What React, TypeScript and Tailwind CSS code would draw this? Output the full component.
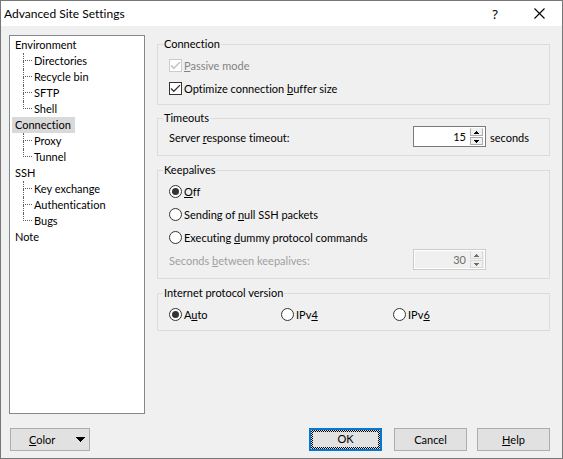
import React from 'react';
import clsx from 'clsx';

const tree = [
  { label: 'Environment', children: ['Directories', 'Recycle bin', 'SFTP', 'Shell'] },
  { label: 'Connection', children: ['Proxy', 'Tunnel'], selected: true },
  { label: 'SSH', children: ['Key exchange', 'Authentication', 'Bugs'] },
  { label: 'Note', children: [] },
];

// "&" marks the accelerator letter, as in the native resource strings
const Accel: React.FC<{ text: string }> = ({ text }) => {
  const i = text.indexOf('&');
  if (i < 0) return <>{text}</>;
  return (
    <span className="whitespace-pre">
      {text.slice(0, i)}
      <u className="underline-offset-1">{text[i + 1]}</u>
      {text.slice(i + 2)}
    </span>
  );
};

const Group: React.FC<{ title: string; className?: string; children: React.ReactNode }> = ({
  title,
  className,
  children,
}) => (
  <fieldset className={clsx('min-w-0 border border-[#dcdcdc] px-[11px]', className)}>
    <legend className="-ml-1.5 px-px leading-[14px]">{title}</legend>
    {children}
  </fieldset>
);

const Check: React.FC<{ text: string; disabled?: boolean }> = ({ text, disabled }) => (
  <label className={clsx('flex h-[23px] items-center gap-0.5', disabled && 'text-[#838383]')}>
    <span className="grid shrink-0">
      <input
        type="checkbox"
        defaultChecked
        disabled={disabled}
        className="peer col-start-1 row-start-1 size-[13px] appearance-none border border-[#333] bg-white disabled:border-[#ccc]"
      />
      <svg
        viewBox="0 0 13 13"
        className="pointer-events-none invisible col-start-1 row-start-1 size-[13px] text-[#333] peer-checked:visible peer-disabled:text-[#bbb]"
      >
        <path d="M2 6.5L4.8 9.3L11 3.1" fill="none" stroke="currentColor" strokeWidth="1.3" />
      </svg>
    </span>
    <Accel text={text} />
  </label>
);

const Radio: React.FC<{ text: string; name: string; checked?: boolean }> = ({ text, name, checked }) => (
  <label className="flex h-[23px] items-center gap-0.5">
    <span className="grid shrink-0 place-items-center">
      <input
        type="radio"
        name={name}
        defaultChecked={checked}
        className="peer col-start-1 row-start-1 size-[13px] appearance-none rounded-full border border-[#333] bg-white"
      />
      <span className="pointer-events-none invisible col-start-1 row-start-1 size-[7px] rounded-full bg-[#333] peer-checked:visible" />
    </span>
    <Accel text={text} />
  </label>
);

const SpinButton: React.FC<{ label: string; up?: boolean; disabled?: boolean }> = ({ label, up, disabled }) => (
  <button
    type="button"
    aria-label={label}
    disabled={disabled}
    className={clsx(
      'flex h-2 w-[13px] items-center justify-center border bg-[#f0f0f0]',
      disabled ? 'border-[#d9d9d9] text-[#6d6d6d]' : 'border-[#acacac] text-black',
      up && 'border-t-[#f0f0f0]',
    )}
  >
    <svg viewBox="0 0 5 3" className="h-[3px] w-[5px]" fill="currentColor" shapeRendering="crispEdges">
      {up ? <path d="M2 0h1v1h1v1h1v1H0V2h1V1h1z" /> : <path d="M0 0h5v1H4v1H3v1H2V2H1V1H0z" />}
    </svg>
  </button>
);

const Spinner: React.FC<{ id: string; value: string; disabled?: boolean }> = ({ id, value, disabled }) => (
  <div
    className={clsx(
      'flex h-[21px] w-[73px] shrink-0 items-center border bg-white p-px',
      disabled ? 'border-[#ccc]' : 'border-[#7a7a7a]',
    )}
  >
    <div className={clsx('flex h-full w-full items-center gap-1 pr-px', disabled && 'bg-[#f0f0f0]')}>
      <input
        id={id}
        type="text"
        defaultValue={value}
        disabled={disabled}
        className="w-0 grow bg-transparent text-right outline-none disabled:text-[#6d6d6d]"
      />
      <div className="flex flex-col gap-px">
        <SpinButton label="Increase" up disabled={disabled} />
        <SpinButton label="Decrease" disabled={disabled} />
      </div>
    </div>
  </div>
);

const DialogButton: React.FC<{ text: string }> = ({ text }) => (
  <button type="button" className="h-[23px] w-[73px] border border-[#adadad] bg-[#e1e1e1]">
    <Accel text={text} />
  </button>
);

const App: React.FC = () => {
  return (
    <div className="flex min-h-screen flex-col border border-[#777] bg-[#f0f0f0] font-[Lato,sans-serif] text-[11px] leading-[14px] text-black [font-variant-ligatures:none]">
      <header className="flex h-[25px] items-center bg-white pl-[3px] pr-[17px]">
        <h1 className="grow text-xs">Advanced Site Settings</h1>
        <button type="button" aria-label="Help" className="mr-9 font-['Noto_Sans',sans-serif] text-[13px]">
          ?
        </button>
        <button type="button" aria-label="Close">
          <svg viewBox="0 0 11 11" className="size-[11px]" fill="none" stroke="currentColor" strokeWidth="1.1">
            <path d="M.5 .5l10 10M10.5 .5l-10 10" />
          </svg>
        </button>
      </header>

      <main className="flex grow gap-3 pb-3.5 pl-2 pr-3 pt-[9px]">
        <nav className="w-[136px] shrink-0 border border-[#828790] bg-white px-0.5 py-px">
          <ul>
            {tree.map((node) => (
              <li key={node.label}>
                <a
                  href="#"
                  className={clsx('block h-4 w-fit pl-[3px] pr-1 leading-4', node.selected && 'bg-[#d9d9d9]')}
                >
                  {node.label}
                </a>
                <ul className="pl-[11px]">
                  {node.children.map((child, i) => (
                    <li key={child} className="flex h-4 gap-0.5 leading-4">
                      <span className="flex w-[9px] flex-col">
                        <span className="h-2 border-b border-l border-dotted border-[#606060]" />
                        {i < node.children.length - 1 && (
                          <span className="h-2 border-l border-dotted border-[#606060]" />
                        )}
                      </span>
                      <a href="#">{child}</a>
                    </li>
                  ))}
                </ul>
              </li>
            ))}
          </ul>
        </nav>

        <form className="min-w-0 grow pt-0.5">
          <Group title="Connection" className="pb-1 pt-[3px]">
            <Check text="&Passive mode" disabled />
            <Check text="Optimize connection &buffer size" />
          </Group>

          <Group title="Timeouts" className="mt-1.5 pb-2 pt-px">
            <div className="flex items-center">
              <label htmlFor="timeout" className="grow pt-0.5">
                <Accel text="Server &response timeout:" />
              </label>
              <Spinner id="timeout" value="15" />
              <span className="w-[52px] pl-1 pt-0.5">seconds</span>
            </div>
          </Group>

          <Group title="Keepalives" className="mt-[7px] pb-2 pt-[3px]">
            <Radio name="keepalives" text="&Off" checked />
            <Radio name="keepalives" text="Sending of &null SSH packets" />
            <Radio name="keepalives" text="Executing &dummy protocol commands" />
            <div className="flex items-center pr-[52px]">
              <label htmlFor="interval" className="grow pt-0.5 text-[#a0a0a0]">
                <Accel text="Seconds &between keepalives:" />
              </label>
              <Spinner id="interval" value="30" disabled />
            </div>
          </Group>

          <Group title="Internet protocol version" className="mt-[7px] pb-1 pt-[3px]">
            <div className="grid grid-cols-[112px_112px_1fr]">
              <Radio name="ipversion" text="A&uto" checked />
              <Radio name="ipversion" text="IPv&4" />
              <Radio name="ipversion" text="IPv&6" />
            </div>
          </Group>
        </form>
      </main>

      <footer className="flex pb-[7px] pl-[9px] pr-3">
        <button
          type="button"
          className="mr-auto flex h-[23px] w-20 items-center border border-[#adadad] bg-[#e1e1e1] pl-[18px] pr-1"
        >
          <span className="grow text-left">
            <Accel text="&Color" />
          </span>
          <svg viewBox="0 0 9 5" className="h-[5px] w-[9px]" shapeRendering="crispEdges">
            <path d="M0 0h9v1H8v1H7v1H6v1H5v1H4V4H3V3H2V2H1V1H0z" />
          </svg>
        </button>
        <button
          type="submit"
          className="mr-3 h-[23px] w-[73px] border-2 border-[#0078d7] bg-[repeating-conic-gradient(#000_0_25%,#e1e1e1_0_50%)] bg-[length:2px_2px] p-0.5"
        >
          <span className="block h-full bg-[#e1e1e1]">OK</span>
        </button>
        <div className="flex gap-2.5">
          <DialogButton text="Cancel" />
          <DialogButton text="&Help" />
        </div>
      </footer>
    </div>
  );
};

export default App;
